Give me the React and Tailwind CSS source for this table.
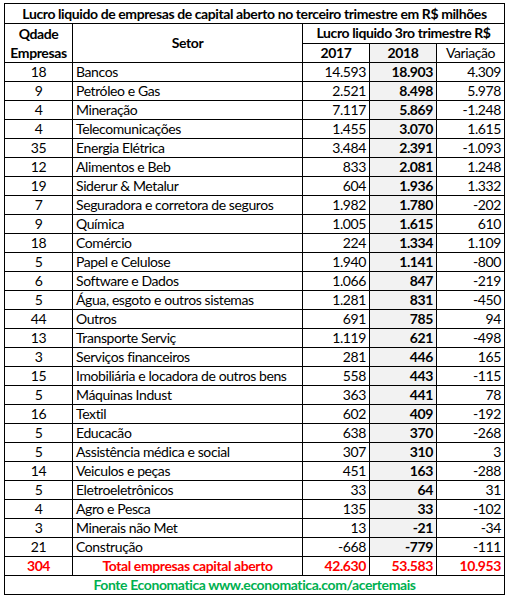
import React from 'react';

const rows = [
    ['18', 'Bancos', '14.593', '18.903', '4.309'],
    ['9', 'Petróleo e Gas', '2.521', '8.498', '5.978'],
    ['4', 'Mineração', '7.117', '5.869', '-1.248'],
    ['4', 'Telecomunicações', '1.455', '3.070', '1.615'],
    ['35', 'Energia Elétrica', '3.484', '2.391', '-1.093'],
    ['12', 'Alimentos e Beb', '833', '2.081', '1.248'],
    ['19', 'Siderur & Metalur', '604', '1.936', '1.332'],
    ['7', 'Seguradora e corretora de seguros', '1.982', '1.780', '-202'],
    ['9', 'Química', '1.005', '1.615', '610'],
    ['18', 'Comércio', '224', '1.334', '1.109'],
    ['5', 'Papel e Celulose', '1.940', '1.141', '-800'],
    ['6', 'Software e Dados', '1.066', '847', '-219'],
    ['5', 'Água, esgoto e outros sistemas', '1.281', '831', '-450'],
    ['44', 'Outros', '691', '785', '94'],
    ['13', 'Transporte Serviç', '1.119', '621', '-498'],
    ['3', 'Serviços financeiros', '281', '446', '165'],
    ['15', 'Imobiliária e locadora de outros bens', '558', '443', '-115'],
    ['5', 'Máquinas Indust', '363', '441', '78'],
    ['16', 'Textil', '602', '409', '-192'],
    ['5', 'Educacão', '638', '370', '-268'],
    ['5', 'Assistência médica e social', '307', '310', '3'],
    ['14', 'Veiculos e peças', '451', '163', '-288'],
    ['5', 'Eletroeletrônicos', '33', '64', '31'],
    ['4', 'Agro e Pesca', '135', '33', '-102'],
    ['3', 'Minerais não Met', '13', '-21', '-34'],
    ['21', 'Construção', '-668', '-779', '-111'],
];

export default function App() {
    return (
        <div className="min-h-screen bg-white pt-[3px] pl-[4px] font-['Lato',sans-serif] text-[14px] leading-none tracking-[-0.4px] text-black">
            <table className="w-[500px] table-fixed border-collapse border border-black">
                <colgroup>
                    <col className="w-[68px]" />
                    <col className="w-[230px]" />
                    <col className="w-[67px]" />
                    <col className="w-[67px]" />
                    <col className="w-[68px]" />
                </colgroup>
                <tbody>
                    <tr className="h-[20px]">
                        <td colSpan={5} className="border border-black text-center font-bold">
                            Lucro liquido de empresas de capital aberto no terceiro trimestre em R$ milhões
                        </td>
                    </tr>
                    <tr className="h-[19px]">
                        <td rowSpan={2} className="border border-black text-center font-bold leading-[19px]">
                            Qdade<br />Empresas
                        </td>
                        <td rowSpan={2} className="border border-black text-center font-bold">Setor</td>
                        <td colSpan={3} className="border border-black text-center font-bold">
                            Lucro liquido 3ro trimestre R$
                        </td>
                    </tr>
                    <tr className="h-[19px]">
                        <td className="border border-black text-center font-bold">2017</td>
                        <td className="border border-black bg-[#f2f2f2] text-center font-bold">2018</td>
                        <td className="border border-black text-center">Variação</td>
                    </tr>
                    {rows.map((r) => (
                        <tr key={r[1]} className="h-[19px]">
                            <td className="border border-black text-center">{r[0]}</td>
                            <td className="border border-black px-[3px] whitespace-nowrap">{r[1]}</td>
                            <td className="border border-black px-[3px] text-right">{r[2]}</td>
                            <td className="border border-black bg-[#f2f2f2] px-[3px] text-right font-bold">{r[3]}</td>
                            <td className="border border-black px-[3px] text-right">{r[4]}</td>
                        </tr>
                    ))}
                    <tr className="h-[19px] font-bold text-[#ff0000]">
                        <td className="border border-black text-center">304</td>
                        <td className="border border-black text-center">Total empresas capital aberto</td>
                        <td className="border border-black px-[3px] text-right">42.630</td>
                        <td className="border border-black px-[3px] text-right">53.583</td>
                        <td className="border border-black px-[3px] text-right">10.953</td>
                    </tr>
                    <tr className="h-[19px]">
                        <td colSpan={5} className="border border-black text-center font-bold text-[#00b050]">
                            Fonte Economatica www.economatica.com/acertemais
                        </td>
                    </tr>
                </tbody>
            </table>
        </div>
    );
}
